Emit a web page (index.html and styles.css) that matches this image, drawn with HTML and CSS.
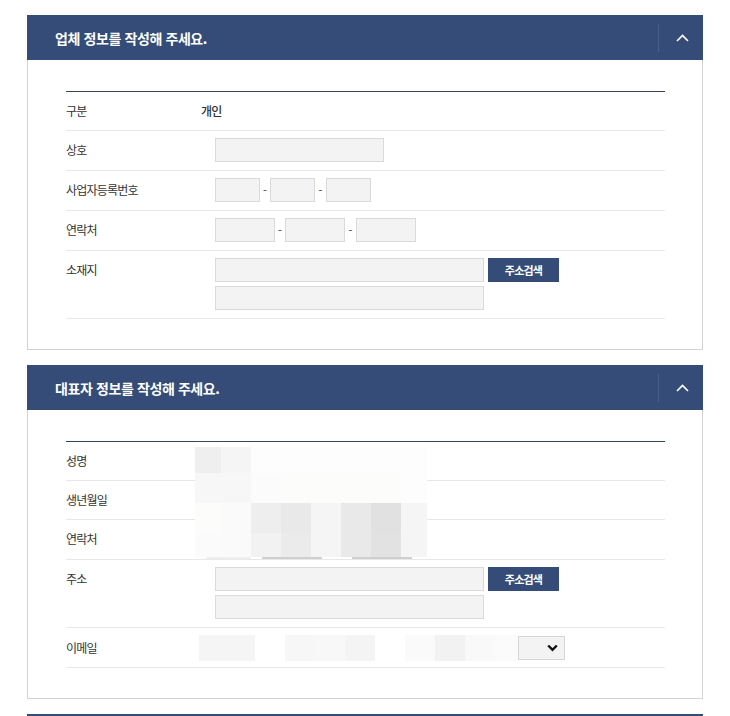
FILE: index.html
```html
<!DOCTYPE html>
<html lang="ko">
<head>
<meta charset="utf-8">
<title>정보 작성</title>
<link rel="stylesheet" href="styles.css">
</head>
<body>
<div class="page">
  <section class="panel">
    <header class="panel-head">
      <h2>업체 정보를 작성해 주세요.</h2>
      <span class="toggle"><svg width="13" height="8" viewBox="0 0 13 8"><path d="M1 7 L6.5 1.5 L12 7" fill="none" stroke="#fff" stroke-width="1.6"/></svg></span>
    </header>
    <div class="panel-body">
      <div class="form-table">
        <div class="row first"><div class="label">구분</div><div class="value">개인</div></div>
        <div class="row"><div class="label">상호</div><div class="fields"><span class="input w169"></span></div></div>
        <div class="row"><div class="label">사업자등록번호</div><div class="fields"><span class="input w45"></span><span class="dash">-</span><span class="input w45"></span><span class="dash dash-w">-</span><span class="input w45"></span></div></div>
        <div class="row"><div class="label">연락처</div><div class="fields"><span class="input w60"></span><span class="dash">-</span><span class="input w60"></span><span class="dash dash-w">-</span><span class="input w60"></span></div></div>
        <div class="row"><div class="label">소재지</div><div class="fields addr"><div class="addr-line"><span class="input w269"></span><button class="btn-search">주소검색</button></div><span class="input w269"></span></div></div>
      </div>
    </div>
  </section>

  <section class="panel">
    <header class="panel-head">
      <h2>대표자 정보를 작성해 주세요.</h2>
      <span class="toggle"><svg width="13" height="8" viewBox="0 0 13 8"><path d="M1 7 L6.5 1.5 L12 7" fill="none" stroke="#fff" stroke-width="1.6"/></svg></span>
    </header>
    <div class="panel-body">
      <div class="form-table">
        <div class="row first"><div class="label">성명</div><div class="fields"><span class="empty"></span></div></div>
        <div class="row first"><div class="label">생년월일</div><div class="fields"><span class="empty"></span></div></div>
        <div class="row"><div class="label">연락처</div><div class="fields"><span class="empty"></span></div></div>
        <div class="row"><div class="label">주소</div><div class="fields addr"><div class="addr-line"><span class="input w269"></span><button class="btn-search">주소검색</button></div><span class="input w269"></span></div></div>
        <div class="row email-row"><div class="label">이메일</div><div class="email">
          <span class="blk b56 e1"></span><span class="blk b30"></span><span class="blk b30 e2"></span><span class="blk b30 e3"></span><span class="blk b30 e4"></span><span class="blk b30"></span><span class="blk b30 e5"></span><span class="blk b30 e6"></span><span class="blk b30 e7"></span><span class="blk b23 e8"></span>
          <span class="select"><svg width="11" height="8" viewBox="0 0 11 8"><path d="M1.2 1.5 L5.5 5.8 L9.8 1.5" fill="none" stroke="#111" stroke-width="2.4"/></svg></span>
        </div></div>

        <div class="mosaic">
          <div class="mosaic-grid">
            <i class="s1"></i><i class="s2"></i><i class="s0"></i><i class="s0"></i><i class="s0"></i><i class="s0"></i><i class="s0"></i><i class="s0"></i>
            <i class="s3"></i><i class="s3"></i><i class="s8"></i><i class="sa"></i><i class="sa"></i><i class="sa"></i><i class="sa"></i><i class="s0"></i>
            <i class="sa"></i><i class="s4"></i><i class="s5"></i><i class="s6"></i><i class="s2"></i><i class="s6"></i><i class="s7"></i><i class="s2"></i>
            <i class="s8"></i><i class="s4"></i><i class="s9"></i><i class="sb"></i><i class="s2"></i><i class="s6"></i><i class="sc"></i><i class="s2"></i>
          </div>
          <div class="mosaic-bars"><span class="bar bar1"></span><span class="bar bar2"></span><span class="bar bar3"></span></div>
        </div>
      </div>
    </div>
  </section>

  <section class="panel">
    <header class="panel-head"></header>
  </section>
</div>
</body>
</html>
```

FILE: styles.css
```css
html, body {
  margin: 0;
  padding: 0;
  background: #fff;
}
body {
  font-family: "Noto Sans CJK KR", "Noto Sans", sans-serif;
  color: #333;
}
.page {
  width: 676px;
  padding: 15px 0 0 27px;
}
.panel {
  margin-bottom: 15px;
}
.panel-head {
  height: 45px;
  background: #344c77;
  display: flex;
  align-items: center;
  padding-left: 28px;
}
.panel-head h2 {
  margin: 0;
  font-size: 14px;
  font-weight: 700;
  color: #fff;
  letter-spacing: -0.4px;
}
.toggle {
  margin-left: auto;
  width: 42px;
  height: 28px;
  padding-left: 2px;
  border-left: 1px solid #46608c;
  display: flex;
  align-items: center;
  justify-content: center;
}
.panel-body {
  border: 1px solid #d3d3d3;
  border-top: none;
  padding: 31px 37px 30px 38px;
}
.form-table {
  border-top: 1px solid #37475b;
  position: relative;
}
.row {
  display: grid;
  grid-template-columns: 135px 1fr;
  border-bottom: 1px solid #e8e8e8;
  padding: 7px 0 8px;
}
.row.first {
  padding-bottom: 7px;
}
.row.email-row {
  padding-bottom: 6px;
}
.label, .value {
  font-size: 12px;
  line-height: 24px;
  letter-spacing: -0.8px;
  color: #333;
}
.email-row .label {
  line-height: 26px;
}
.value {
  font-weight: 500;
}
.fields {
  display: flex;
  align-items: center;
  margin-left: 14px;
}
.fields.addr {
  flex-direction: column;
  align-items: flex-start;
  gap: 4px;
}
.addr-line {
  display: flex;
  align-items: center;
}
.input {
  display: block;
  height: 24px;
  box-sizing: border-box;
  background: #f3f3f3;
  border: 1px solid #dadada;
}
.w45 { width: 45px; }
.w60 { width: 60px; }
.w169 { width: 169px; }
.w269 { width: 269px; }
.empty {
  display: block;
  height: 24px;
}
.dash {
  width: 10px;
  text-align: center;
  font-size: 11px;
  color: #333;
}
.dash-w {
  width: 11px;
}
.btn-search {
  margin-left: 4px;
  width: 71px;
  height: 24px;
  border: none;
  padding: 0;
  background: #344c77;
  color: #fff;
  font-family: "Noto Sans CJK KR", "Noto Sans", sans-serif;
  font-size: 11px;
  font-weight: 700;
  letter-spacing: -0.8px;
}
.email {
  display: flex;
  align-items: center;
  margin-left: -2px;
}
.blk {
  display: block;
  height: 26px;
  background: #fff;
}
.b56 { width: 56px; }
.b30 { width: 30px; }
.b23 { width: 23px; }
.e1 { background: #f5f5f5; }
.e2 { background: #f7f7f7; }
.e3 { background: #f8f8f8; }
.e4 { background: #f4f4f4; }
.e5 { background: #fafafa; }
.e6 { background: #f2f2f2; }
.e7 { background: #f9f9f9; }
.e8 { background: #fbfbfb; }
.select {
  width: 47px;
  height: 24px;
  box-sizing: border-box;
  background: #f3f3f3;
  border: 1px solid #d6d6d6;
  display: flex;
  align-items: center;
  justify-content: flex-end;
  padding-right: 6px;
}
.mosaic {
  position: absolute;
  left: 129px;
  top: 5px;
}
.mosaic-grid {
  display: grid;
  grid-template-columns: 26px repeat(6, 30px) 26px;
  grid-template-rows: 26px 30px 30px 24px;
}
.mosaic-grid i { display: block; }
.s0 { background: #fdfdfd; }
.s1 { background: #efefef; }
.s2 { background: #f5f5f5; }
.s3 { background: #f7f7f7; }
.s4 { background: #fafafa; }
.s5 { background: #eeeeee; }
.s6 { background: #e9e9e9; }
.s7 { background: #e1e1e1; }
.s8 { background: #fbfbfb; }
.s9 { background: #f2f2f2; }
.sa { background: #fcfcfb; }
.sb { background: #ebebeb; }
.sc { background: #e2e2e2; }
.mosaic-bars {
  display: flex;
  height: 2px;
}
.bar { display: block; height: 2px; }
.bar1 { margin-left: 11px; width: 45px; background: #efefef; }
.bar2 { margin-left: 11px; width: 60px; background: #cfcfcf; }
.bar3 { margin-left: 30px; width: 60px; background: #cfcfcf; }
```
